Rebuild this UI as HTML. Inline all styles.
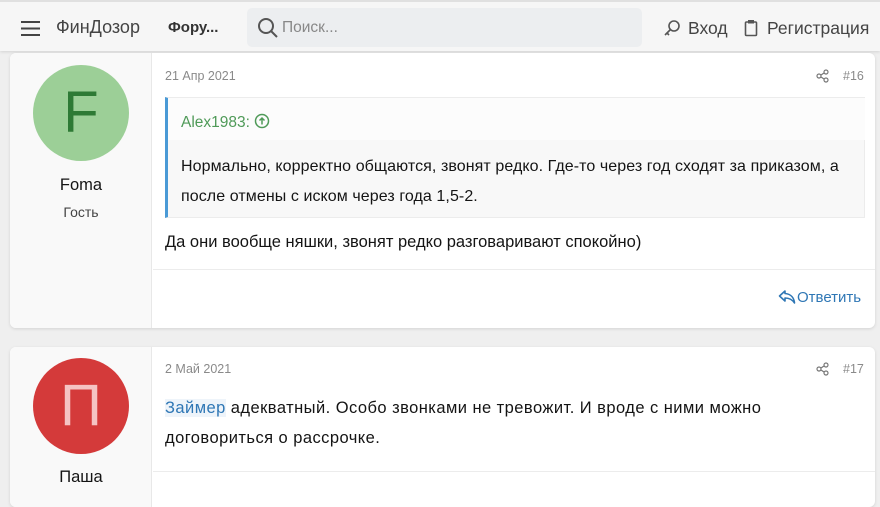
<!DOCTYPE html>
<html><head><meta charset="utf-8"><style>
*{box-sizing:border-box;margin:0;padding:0}
body{width:880px;height:494px;overflow:hidden;background:#efefef;font-family:"Liberation Sans","Noto Sans CJK SC",sans-serif;position:relative;color:#141414}
.hdr{position:absolute;left:0;top:0;width:880px;height:51px;background:#f6f6f6;border-top:2px solid #e0e0e0;box-shadow:0 1px 3px rgba(0,0,0,.12)}
.abs{position:absolute}
.card{position:absolute;left:10px;width:865px;background:#fff;border-radius:6px;box-shadow:0 1px 3px rgba(0,0,0,.12);overflow:hidden}
.left{position:absolute;left:0;top:0;bottom:0;width:142px;background:#f9f9f9;border-right:1px solid #e8e8e8}
.av{position:absolute;left:23px;width:96px;height:96px;border-radius:50%;text-align:center;font-size:58px;line-height:96px}
.name{position:absolute;left:0;width:142px;text-align:center;font-size:16px}
.date{position:absolute;left:155px;font-size:12.5px;color:#8a8a8a}
.num{position:absolute;font-size:12.5px;color:#8a8a8a}
.txt{font-size:16.5px;line-height:30px;white-space:nowrap}
</style></head><body>
<div class="hdr">
 <div class="abs" style="left:21px;top:19px;width:19px;height:2px;background:#444;box-shadow:0 6.5px 0 #444,0 13px 0 #444"></div>
 <div class="abs" style="left:56px;top:15px;font-size:18px;color:#444">ФинДозор</div>
 <div class="abs" style="left:168px;top:17px;font-size:15px;font-weight:bold;color:#333">Фору...</div>
 <div class="abs" style="left:247px;top:6px;width:395px;height:39px;background:#eceef0;border-radius:5px">
  <svg class="abs" style="left:10px;top:9px" width="22" height="22" viewBox="0 0 22 22"><circle cx="9" cy="9" r="7" fill="none" stroke="#555" stroke-width="2"/><path d="M14 14l6 6" stroke="#555" stroke-width="2"/></svg>
  <div class="abs" style="left:35px;top:11px;font-size:15.5px;color:#888">Поиск...</div>
 </div>
 <svg class="abs" style="left:663px;top:17px" width="18" height="18" viewBox="0 0 18 18"><circle cx="11" cy="7" r="5" fill="none" stroke="#555" stroke-width="1.6"/><path d="M7 11l-5 5M4 14l2 2" stroke="#555" stroke-width="1.6" fill="none"/></svg>
 <div class="abs" style="left:688px;top:16px;font-size:17.5px;color:#444">Вход</div>
 <svg class="abs" style="left:744px;top:17px" width="14" height="18" viewBox="0 0 14 18"><rect x="1.5" y="3" width="11" height="13.5" rx="1" fill="none" stroke="#555" stroke-width="1.6"/><rect x="4" y="1" width="6" height="3.5" fill="#555"/></svg>
 <div class="abs" style="left:767px;top:16px;font-size:17.5px;color:#444">Регистрация</div>
</div>

<div class="card" style="top:53px;height:275px">
 <div class="left">
  <div class="av" style="top:12px;background:#9ccf97;color:#2e7a35">F</div>
  <div class="name" style="top:123px;font-size:16.5px">Foma</div>
  <div class="name" style="top:151px;font-size:14px;color:#444">Гость</div>
 </div>
 <div class="date" style="top:16px">21 Апр 2021</div>
 <svg class="abs" style="left:806px;top:16px" width="14" height="14" viewBox="0 0 14 14"><circle cx="10" cy="3" r="2" fill="none" stroke="#777" stroke-width="1.2"/><circle cx="3" cy="7" r="2" fill="none" stroke="#777" stroke-width="1.2"/><circle cx="10" cy="11" r="2" fill="none" stroke="#777" stroke-width="1.2"/><path d="M5 6l3-2M5 8l3 2" stroke="#777" stroke-width="1.2"/></svg>
 <div class="num" style="left:833px;top:16px">#16</div>
 <div class="abs" style="left:155px;top:44px;width:700px;height:121px;background:#f8f8f8;border:1px solid #ececec;border-left:3px solid #4a9ad6">
  <div class="abs" style="left:0;top:0;width:697px;height:42px;background:#fcfcfc"></div>
  <div class="abs" style="left:13px;top:15px;font-size:15.5px;color:#4f9a58">Alex1983: <svg width="16" height="16" viewBox="0 0 16 16" style="vertical-align:-2px"><circle cx="8" cy="8" r="6.5" fill="none" stroke="#4f9a58" stroke-width="1.5"/><path d="M8 11.5V5M5.5 7.5L8 5l2.5 2.5" fill="none" stroke="#4f9a58" stroke-width="1.5"/></svg></div>
  <div class="abs txt" style="left:13px;top:54px;font-size:16px;letter-spacing:0.08px">Нормально, корректно общаются, звонят редко. Где-то через год сходят за приказом, а<br>после отмены с иском через года 1,5-2.</div>
 </div>
 <div class="abs txt" style="left:155px;top:174px">Да они вообще няшки, звонят редко разговаривают спокойно)</div>
 <div class="abs" style="left:143px;top:216px;width:722px;height:1px;background:#ececec"></div>
 <svg class="abs" style="left:768px;top:236px" width="18" height="16" viewBox="0 0 18 16"><path d="M7 2L1.5 7 7 12V9c4 0 7 1 9.5 5-0.5-5-3.5-9-9.5-9.5z" fill="none" stroke="#2f77b5" stroke-width="1.6" stroke-linejoin="round"/></svg>
 <div class="abs" style="left:787px;top:236px;font-size:15px;color:#2f77b5">Ответить</div>
</div>

<div class="card" style="top:347px;height:160px">
 <div class="left">
  <div class="av" style="top:11px;background:#d43a3a;color:#f5c3c3">П</div>
  <div class="name" style="top:121px;font-size:16.5px">Паша</div>
 </div>
 <div class="date" style="top:15px">2 Май 2021</div>
 <svg class="abs" style="left:806px;top:15px" width="14" height="14" viewBox="0 0 14 14"><circle cx="10" cy="3" r="2" fill="none" stroke="#777" stroke-width="1.2"/><circle cx="3" cy="7" r="2" fill="none" stroke="#777" stroke-width="1.2"/><circle cx="10" cy="11" r="2" fill="none" stroke="#777" stroke-width="1.2"/><path d="M5 6l3-2M5 8l3 2" stroke="#777" stroke-width="1.2"/></svg>
 <div class="num" style="left:833px;top:15px">#17</div>
 <div class="abs txt" style="left:155px;top:46px;letter-spacing:0.45px"><span style="color:#2f77b5;background:#eef4fa">Займер</span> адекватный. Особо звонками не тревожит. И вроде с ними можно<br>договориться о рассрочке.</div>
 <div class="abs" style="left:143px;top:124px;width:722px;height:1px;background:#ececec"></div>
</div>
</body></html>
